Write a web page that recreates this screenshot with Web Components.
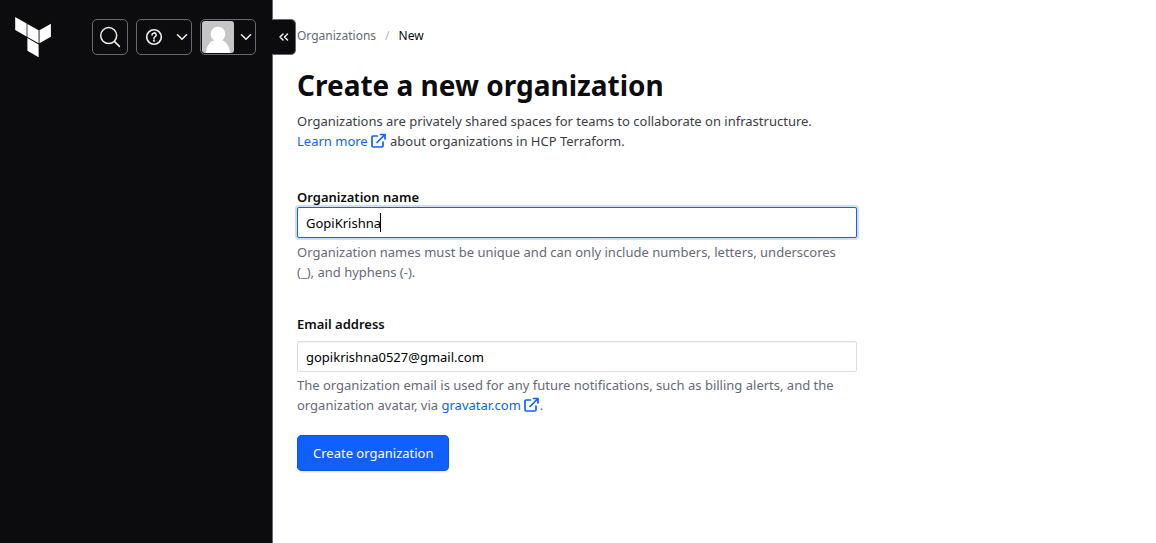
<!DOCTYPE html>
<html lang="en">
<head>
<meta charset="utf-8">
<meta name="viewport" content="width=device-width, initial-scale=1">
<title>Create a new organization</title>
<style>
  html, body { margin: 0; min-height: 100%; }
  body {
    --ink: #0c0c0e;
    --muted: #656a76;
    --blue: #1060ff;
    background: #fff;
    color: #3b3d45;
    font: 13px/20px "Noto Sans", "Open Sans", sans-serif;
  }
</style>
</head>
<body>
<app-shell>
  <side-nav slot="nav"></side-nav>
  <bread-crumbs></bread-crumbs>
  <page-header heading="Create a new organization">
    Organizations are privately shared spaces for teams to collaborate on infrastructure.<br>
    <external-link href="#learn-more">Learn more</external-link> about organizations in HCP Terraform.
  </page-header>
  <org-form></org-form>
</app-shell>

<script>
function define(name, html, setup) {
  const template = document.createElement('template');
  template.innerHTML = html;
  customElements.define(name, class extends HTMLElement {
    constructor() {
      super();
      this.attachShadow({ mode: 'open' }).append(template.content.cloneNode(true));
    }
    connectedCallback() {
      if (setup) setup(this, this.shadowRoot);
    }
  });
}

define('app-shell', `
  <style>
    :host { display: grid; grid-template-columns: 273px minmax(0, 1fr); min-height: 100vh; }
    main { padding: 24px; }
  </style>
  <slot name="nav"></slot>
  <main><slot></slot></main>`);

define('nav-control', `
  <style>
    :host { display: block; }
    button {
      box-sizing: border-box; height: 36px; min-width: 36px; padding: 0 3px 0 8px;
      display: flex; align-items: center; justify-content: center; gap: 13px;
      background: none; color: #efeff1; border: 1px solid #656a76; border-radius: 5px;
    }
    :host([kind="single"]) button { padding: 0; }
    :host([kind="avatar"]) button { padding: 0 3px 0 1px; gap: 6px; }
    .chevron { display: block; }
    :host([kind="single"]) .chevron { display: none; }
  </style>
  <button type="button">
    <slot></slot>
    <svg class="chevron" width="12" height="12" viewBox="0 0 12 12" fill="none" stroke="currentColor" stroke-width="1.6" stroke-linecap="round" stroke-linejoin="round"><path d="M1.5 3.8 6 8.2l4.500-4.400"/></svg>
  </button>`, (host, root) => {
    root.querySelector('button').setAttribute('aria-label', host.getAttribute('label'));
  });

define('side-nav', `
  <style>
    :host { display: block; position: relative; background: var(--ink); border-right: 1px solid #656a76; }
    header { display: flex; align-items: center; justify-content: space-between; padding: 16px 16px 0 13px; }
    header a { display: block; height: 42px; }
    nav { display: flex; gap: 8px; }
    svg { display: block; }
    .toggle {
      position: absolute; top: 19px; left: 100%; box-sizing: border-box;
      width: 24px; height: 36px; padding: 0; display: grid; place-items: center;
      background: var(--ink); color: #efeff1;
      border: 1px solid #656a76; border-left: 0; border-radius: 0 5px 5px 0;
    }
  </style>
  <header>
    <a href="#home" aria-label="HCP Terraform">
      <svg width="40" height="42" viewBox="0 0 40 42" fill="#fff">
        <path d="M2.200 1 13.600 7.400V20.400L2.200 14z"/>
        <path d="M14.400 7.900 25.600 14.300V27.300L14.400 20.900z"/>
        <path d="M26.500 14.300 37.900 7.800V20.800L26.500 27.300z"/>
        <path d="M14.400 22 25.600 28.400V41.200L14.400 34.800z"/>
      </svg>
    </a>
    <nav aria-label="Account">
      <nav-control kind="single" label="Search">
        <svg width="22" height="22" viewBox="0 0 22 22" fill="none" stroke="currentColor" stroke-width="1.5" stroke-linecap="round"><circle cx="9.700" cy="9.600" r="8"/><path d="m15.400 15.400 5 5"/></svg>
      </nav-control>
      <nav-control label="Help">
        <svg width="18" height="18" viewBox="0 0 18 18" fill="none" stroke="currentColor" stroke-width="1.600" stroke-linecap="round"><circle cx="9" cy="9" r="7.300"/><path d="M7 7a2.100 2.100 0 1 1 3 1.900c-.700.350-1 .700-1 1.500"/><circle cx="9" cy="12.600" r=".4"/></svg>
      </nav-control>
      <nav-control kind="avatar" label="User menu">
        <svg width="32" height="32" viewBox="0 0 32 32"><rect width="32" height="32" rx="3" fill="#c5c5c5"/><circle cx="16" cy="13" r="7.300" fill="#fff"/><path d="M4 32c.500-7.500 4.500-12.500 9-13h6c4.500.500 8.500 5.500 9 13z" fill="#fff"/></svg>
      </nav-control>
    </nav>
  </header>
  <button class="toggle" type="button" aria-label="Collapse navigation">
    <svg width="12" height="12" viewBox="0 0 12 12" fill="none" stroke="currentColor" stroke-width="1.500" stroke-linecap="round" stroke-linejoin="round"><path d="M5 3 2 6 5 9M9.500 3 6.500 6 9.500 9"/></svg>
  </button>`);

define('bread-crumbs', `
  <style>
    :host { display: block; font-size: 12px; line-height: 24px; }
    ol { display: flex; gap: 9px; list-style: none; margin: 0; padding: 0; }
    li { display: flex; gap: 9px; }
    a { color: var(--muted); text-decoration: none; }
    li + li { color: var(--ink); }
    li + li::before { content: "/"; color: #b2b6bd; }
  </style>
  <nav aria-label="Breadcrumb"><ol>
    <li><a href="#organizations">Organizations</a></li>
    <li aria-current="page">New</li>
  </ol></nav>`);

define('page-header', `
  <style>
    :host { display: block; padding-top: 19px; }
    h1 { margin: 0; color: var(--ink); font-size: 28px; line-height: 36px; font-weight: 700; }
    p { margin: 8px 0 0; }
  </style>
  <h1></h1>
  <p><slot></slot></p>`, (host, root) => {
    root.querySelector('h1').textContent = host.getAttribute('heading');
  });

define('external-link', `
  <style>
    :host { display: inline; }
    a { color: var(--blue); text-decoration: none; white-space: nowrap; }
    svg { width: 16px; height: 16px; margin-left: 3px; vertical-align: -3px; }
  </style>
  <a><slot></slot><svg viewBox="0 0 16 16" fill="none" stroke="currentColor" stroke-width="1.700" stroke-linecap="round" stroke-linejoin="round"><path d="M6.500 3H2.200Q1 3 1 4.200v8.600Q1 14 2.200 14h8.600q1.200 0 1.200-1.200V9M9.500 1.500H14V6M13.500 2 6 9.500"/></svg></a>`, (host, root) => {
    root.querySelector('a').href = host.getAttribute('href');
  });

define('text-field', `
  <style>
    :host { display: block; }
    label { display: block; color: var(--ink); font-weight: 600; }
    .box { position: relative; }
    :host([spaced]) .box { margin-top: 7px; }
    input {
      display: block; box-sizing: border-box; width: 100%; height: 31px; padding: 0 8px;
      border: 1px solid #dbdde2; border-radius: 2px; outline: 0; background: #fff;
      box-shadow: inset 0 1px 1px #0000000d;
      color: #000; font: inherit;
    }
    :host([active]) input { border-color: var(--blue); box-shadow: 0 0 0 2px #cfdfff; }
    .caret { display: none; position: absolute; left: 83px; top: 6px; width: 1px; height: 19px; background: #000; }
    :host([active]) .caret { display: block; }
    p { margin: 4px 0 0; padding-right: 8px; color: var(--muted); }
    :host([spaced]) p { margin-top: 3px; }
  </style>
  <label for="control"></label>
  <div class="box"><input id="control" aria-describedby="hint"><span class="caret"></span></div>
  <p id="hint"><slot></slot></p>`, (host, root) => {
    root.querySelector('label').textContent = host.getAttribute('label');
    const input = root.querySelector('input');
    input.type = host.getAttribute('type');
    input.value = host.getAttribute('value');
  });

define('org-form', `
  <style>
    :host { display: block; max-width: 560px; margin-top: 36px; }
    form { display: grid; gap: 32px; }
    button {
      justify-self: start; height: 36px; margin-top: -12px; padding: 0 16px;
      border: 0; border-radius: 5px; background: var(--blue); color: #fff;
      font: inherit; box-shadow: inset 0 0 0 1px #0c56e9, 0 1px 1px #656a761a, 0 2px 2px #656a760d;
    }
  </style>
  <form>
    <text-field active label="Organization name" type="text" value="GopiKrishna">Organization names must be unique and can only include numbers, letters, underscores (_), and hyphens (-).</text-field>
    <text-field spaced label="Email address" type="email" value="gopikrishna0527@gmail.com">The organization email is used for any future notifications, such as billing alerts, and the organization avatar, via <external-link href="#gravatar">gravatar.com</external-link>.</text-field>
    <button type="submit">Create organization</button>
  </form>`);
</script>
</body>
</html>
